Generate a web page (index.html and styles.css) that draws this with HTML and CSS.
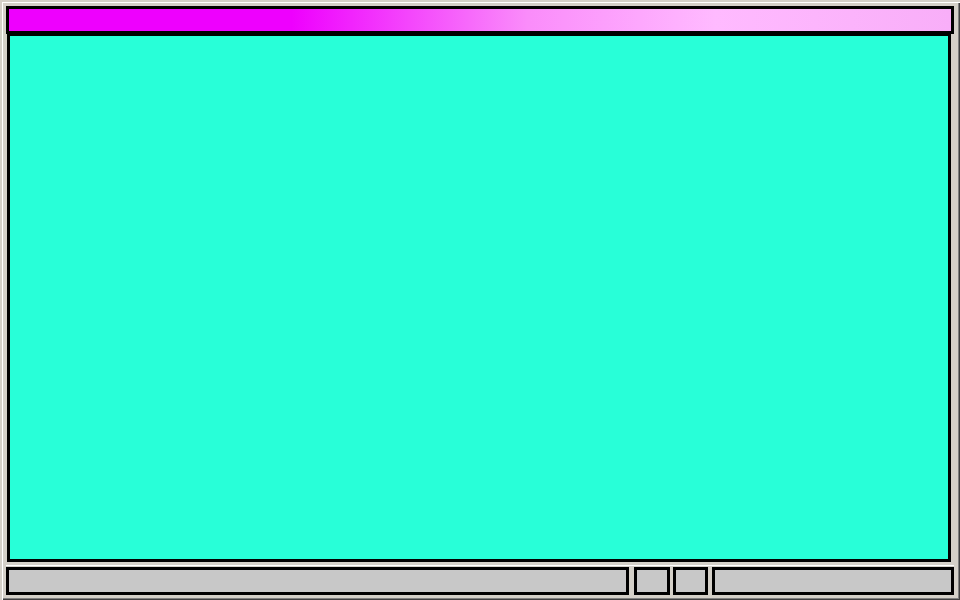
FILE: index.html
```html
<!DOCTYPE html>
<html>
<head>
<meta charset="utf-8">
<link rel="stylesheet" href="styles.css">
</head>
<body>
<div class="window">
  <div class="titlebar"></div>
  <div class="content"></div>
  <div class="statusbar">
    <div class="panel panel-main"></div>
    <div class="panel panel-a"></div>
    <div class="panel panel-b"></div>
    <div class="panel panel-end"></div>
  </div>
</div>
</body>
</html>
```
FILE: styles.css
```css
html, body {
  margin: 0;
  padding: 0;
  background: #d4d0c8;
}
.window {
  box-sizing: border-box;
  width: 960px;
  height: 600px;
  padding: 6px 6px 5px 6px;
  background: #d4d0c8;
  display: flex;
  flex-direction: column;
  box-shadow: inset 2px 2px 0 #d4d0c8, inset 3px 3px 0 #ffffff, inset -1px -1px 0 #404040, inset -2px -2px 0 #808080;
}
.titlebar {
  box-sizing: border-box;
  height: 28px;
  border: 3px solid #000;
  background: linear-gradient(to right, #ee00fe 0%, #ee00fe 30%, #fa8cfa 55%, #ffbaff 75%, #f8aef8 100%);
}
.content {
  box-sizing: border-box;
  flex: 1;
  margin: 0 3px 3px 1px;
  border: 3px solid #000;
  border-top-width: 2px;
  background: #28ffd8;
}
.statusbar {
  display: flex;
  border-top: 1px solid #ffffff;
  padding-top: 1px;
  height: 28px;
}
.panel {
  box-sizing: border-box;
  height: 28px;
  border: 3px solid #000;
  background: #c8c8c8;
}
.panel-main { width: 623px; margin-right: 5px; }
.panel-a { width: 36px; margin-right: 3px; }
.panel-b { width: 35px; margin-right: 4px; }
.panel-end { flex: 1; }
```
